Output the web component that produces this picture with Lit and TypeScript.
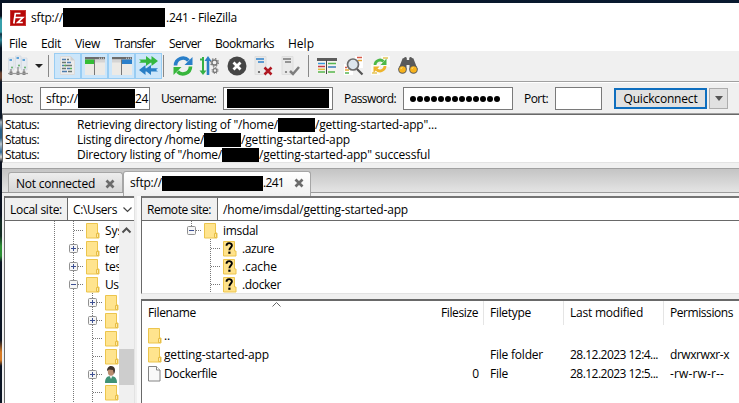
import { LitElement, html, css, svg, nothing } from "lit";
import { customElement, property } from "lit/decorators.js";

/** Text run whose tracking is tuned so that it occupies a given width. */
@customElement("ui-text")
class UiText extends LitElement {
  @property() text = "";
  @property({ type: Number }) w = 0;
  static styles = css`
    :host { display: inline-block; flex: none; white-space: pre; line-height: inherit; }
    span { display: inline-block; }
  `;
  updated() {
    const s = this.renderRoot.querySelector("span") as HTMLElement;
    s.style.letterSpacing = "0px";
    const natural = s.getBoundingClientRect().width;
    if (this.w && this.text.length > 1) {
      s.style.letterSpacing = (this.w - natural) / this.text.length + "px";
    }
  }
  render() {
    return html`<span>${this.text}</span>`;
  }
}

const t = (text: string, w: number) => html`<ui-text .text=${text} .w=${w}></ui-text>`;

const folder = html`<svg class="ic" width="14" height="17" viewBox="0 0 14 17">
  <path d="M.5 1.500h11v9.500h1.500v5H.5z" fill="#ffe48e" stroke="#ecc54d"/>
  <path d="M10.500 15.500v-4h2v4z" fill="#ffeaa8" stroke="#e6bd45"/></svg>`;
const unknown = html`<svg class="ic" width="14" height="17" viewBox="0 0 14 17">
  <path d="M.5 1.500h11v9.500h1.500v5H.5z" fill="#ffe28a" stroke="#ecc54d"/>
  <path d="M3.500 5.800c0-3.600 5.400-3.400 5.400-.3 0 2-2.500 2.100-2.500 4.700" fill="none" stroke="#000" stroke-width="1.900"/>
  <rect x="5.300" y="11.600" width="2.200" height="2.200"/></svg>`;
const fileIcon = html`<svg class="ic" width="14" height="17" viewBox="0 0 14 17">
  <path d="M.5 1.500h8l3.500 3.500v11H.5z" fill="#f9f9f9" stroke="#848484"/><path d="M8.500 1.500V5H12" fill="#fff" stroke="#848484"/></svg>`;
const user = html`<svg class="ic" width="14" height="17" viewBox="0 0 14 17">
  <path d="M0 17c0-5 2-6.500 5-7 4 0 7 1 7 7z" fill="#3f9276"/><path d="M4 9l2 4 2-4z" fill="#eee"/>
  <ellipse cx="6" cy="5.500" rx="3.200" ry="4.300" fill="#b98c70"/><path d="M2 5c0-7 8-6 8-1 0 2-.5 3-1 4L8 4 4 3.500z" fill="#3e332d"/></svg>`;
const cross = html`<svg width="10" height="10" viewBox="0 0 10 10"><path d="M1.500 1.500l7 7M8.500 1.500l-7 7" stroke="#6b6b6b" stroke-width="2.700"/></svg>`;

const icons = {
  sites: html`<svg width="20" height="20" viewBox="0 0 20 20">
    ${[[0.5, 2], [7.5, 0], [13.5, 2]].map(([x, y]) => svg`<path d="M${x} ${y}h5.500v12h-5.500z" fill="#e6ebf1" stroke="#cdd5dd" stroke-width=".6"/><path d="M${x + 1} ${y + 2}h2.500" stroke="#4f9bd5" stroke-width="1.800"/><circle cx="${x + 3.500}" cy="${y + 9.500}" r=".9" fill="#57a85c"/><path d="M${x + 2.500} ${y + 11}V18" stroke="#858585" stroke-width="1.200"/><rect x="${x + 1}" y="15.500" width="3" height="3.500" fill="#808080"/>`)}
    <path d="M0 17.500h20" stroke="#999" stroke-width="1.200"/></svg>`,
  log: html`<svg width="15" height="19" viewBox="0 0 15 19"><path d="M.5.500h10l4 4v14H.5z" fill="#ececec" stroke="#dcdcdc"/><path d="M10.500 0v4.500H15z" fill="#cfcfcf"/>
    <path d="M2 3.500h4M7 6.500h4M2 9.500h2M7 12.500h3M2 15.500h5" stroke="#4d7dae" stroke-width="1.400"/><path d="M7 3.500h2M2 6.500h4M5 9.500h7M2 12.500h4M8 15.500h4" stroke="#6b7771" stroke-width="1.400"/><path d="M4 9.500h2M10 12.500h2" stroke="#53b15a" stroke-width="1.500"/></svg>`,
  local: html`<svg width="20" height="18" viewBox="0 0 20 18"><path d="M0 0h20v18H0z" fill="#eceae6"/><path d="M0 0h20v2.500H0z" fill="#6b6b6b"/><path d="M0 2.500h9v4.500H0z" fill="#34bd36"/><path d="M9.500 2.500v15.500" stroke="#777"/><path d="M10 2.500h10v3H10z" fill="#d4d4d4"/><path d="M14 1.200h5" stroke="#ddd" stroke-dasharray="1 1"/></svg>`,
  remote: html`<svg width="20" height="18" viewBox="0 0 20 18"><path d="M0 0h20v18H0z" fill="#eceae6"/><path d="M0 0h20v2.500H0z" fill="#6b6b6b"/><path d="M10 2.500h10v4.500H10z" fill="#2b7fca"/><path d="M9.500 2.500v15.500" stroke="#777"/><path d="M0 2.500h9v3H0z" fill="#d4d4d4"/><path d="M14 1.200h5" stroke="#ddd" stroke-dasharray="1 1"/></svg>`,
  queue: html`<svg width="21" height="19" viewBox="0 0 21 19"><path d="M1 3.500h7V0l4.500 3.500h1V0L20 5l-6.500 5V6.700h-1L8 10V6.700H1l2-1.600z" fill="#35b83f"/><path d="M20 12.300h-7V9L8.500 12.300h-1V9L1 14l6.500 5v-3.500h1L13 19v-3.500h7l-2-1.600z" fill="#297fc6"/></svg>`,
  refresh: html`<svg width="20" height="20" viewBox="0 0 20 20"><path d="M2.500 9.500A7.500 7.500 0 0 1 15.500 4.500" fill="none" stroke="#2a7fc9" stroke-width="3.600"/><path d="M19.500 1v8h-8z" fill="#2a7fc9"/><path d="M17.500 10.500A7.500 7.500 0 0 1 4.500 15.500" fill="none" stroke="#38b63d" stroke-width="3.600"/><path d="M.5 19v-8h8z" fill="#38b63d"/></svg>`,
  process: html`<svg width="19" height="20" viewBox="0 0 19 20"><path d="M3 1v15M0 3.500h3" stroke="#35b044" stroke-width="2"/><path d="M-.5 14.500h7L3 19z" fill="#35b044"/><path d="M8 3v16" stroke="#2b7fc7" stroke-width="2.600"/><path d="M4.500 5h7L8 0z" fill="#2b7fc7"/>
    <circle cx="14.500" cy="6.500" r="2.600" fill="none" stroke="#777" stroke-width="1.500"/><circle cx="14.500" cy="6.500" r="3.900" fill="none" stroke="#777" stroke-width="1.200" stroke-dasharray="1.500 1.560"/><circle cx="15" cy="14.500" r="1.900" fill="none" stroke="#777" stroke-width="1.300"/><circle cx="15" cy="14.500" r="3" fill="none" stroke="#777" stroke-dasharray="1.200 1.150"/></svg>`,
  cancel: html`<svg width="20" height="20" viewBox="0 0 20 20"><circle cx="10" cy="10" r="9.500" fill="#464646"/><path d="M6.500 6.500l7 7M13.500 6.500l-7 7" stroke="#fff" stroke-width="2.800"/></svg>`,
  disconnect: html`<svg width="19" height="20" viewBox="0 0 19 20"><path d="M1 .5h11v18H1z" fill="#e9e9e9" stroke="#dedede"/><path d="M2 3h8M4 6h6" stroke="#3183ca" stroke-width="1.700"/><circle cx="5" cy="16" r="1.100" fill="#555"/><path d="M10.500 11.500l7 7M17.500 11.500l-7 7" stroke="#b01822" stroke-width="2.500"/></svg>`,
  reconnect: html`<svg width="19" height="20" viewBox="0 0 19 20"><path d="M1 .5h11v18H1z" fill="#e9e9e9" stroke="#dedede"/><path d="M2 3h8M4 6h6" stroke="#777" stroke-width="1.700"/><circle cx="5" cy="16" r="1.100" fill="#777"/><path d="M9 15l3 3 6-7" fill="none" stroke="#7d7d7d" stroke-width="2.500"/></svg>`,
  compare: html`<svg width="20" height="16" viewBox="0 0 20 16"><path d="M0 0h20v16H0z" fill="#f5f3ee"/><path d="M0 0h20v3H0z" fill="#5c5c5c"/><path d="M1 5.500h7" stroke="#389bdd" stroke-width="1.500"/><path d="M11 5.500h8M1 14h7M11 14h7" stroke="#55b64e" stroke-width="1.500"/><path d="M1 8.500h7" stroke="#c43a49" stroke-width="1.500"/><path d="M11 9h8" stroke="#3a7db9" stroke-width="1.500"/><path d="M1 11.300h7" stroke="#e4bd40" stroke-width="1.500"/><path d="M9.500 2v14" stroke="#444"/></svg>`,
  search: html`<svg width="20" height="20" viewBox="0 0 20 20"><path d="M11 0h8v12h-8zM0 8h9v11H0z" fill="#fff"/><path d="M13 1.500h5" stroke="#d65a48" stroke-width="1.500"/><path d="M14 4.500h4M1 14h4" stroke="#e5a935" stroke-width="1.500"/><path d="M1 17h4" stroke="#58b455" stroke-width="1.500"/><path d="M1 11.500h2" stroke="#d65a48" stroke-width="1.500"/><circle cx="9" cy="8.500" r="5.500" fill="#dce6ed" stroke="#6b6b6b" stroke-width="1.700"/><path d="M13 13l5.500 5.500" stroke="#555" stroke-width="2.200"/></svg>`,
  sync: html`<svg width="20" height="20" viewBox="0 0 20 20"><path d="M10 0h9v11h-9zM0 8h9v11H0z" fill="#fbfbf9"/><path d="M12 2h5M1 17h5" stroke="#e6c657" stroke-width="1.300"/><path d="M4 9a5 5 0 0 1 8.500-3.500" fill="none" stroke="#4db848" stroke-width="2.800"/><path d="M15.500 2.500v6.500h-6z" fill="#4db848"/><path d="M14 10a5 5 0 0 1-8.500 3.500" fill="none" stroke="#edb42d" stroke-width="2.800"/><path d="M2.500 17v-6.500h6z" fill="#edb42d"/></svg>`,
  find: html`<svg width="20" height="18" viewBox="0 0 20 18"><path d="M4 3q0-2 2-2 .5-1 1.500-1t1.300 1.200V3h2.400V1.200Q11.500 0 12.500 0T14 1q2 0 2 2l3.500 9h-8V8h-3v4h-8z" fill="#5a5a5a"/><circle cx="4.500" cy="12.500" r="4.300" fill="#5a5a5a"/><circle cx="15.500" cy="12.500" r="4.300" fill="#5a5a5a"/><circle cx="4.500" cy="12.500" r="3.300" fill="#f8b31c"/><circle cx="15.500" cy="12.500" r="3.300" fill="#f8b31c"/><path d="M3 12q0-1.500 1.500-1.500M14 12q0-1.500 1.500-1.500" fill="none" stroke="#ffe27a"/></svg>`,
};

type Row = { box?: "+" | "-"; label?: string; w?: number; icon: unknown; deep?: boolean };
const localRows: Row[] = [
  { label: "Sys", w: 18, icon: folder },
  { box: "+", label: "tem", w: 21, icon: folder },
  { box: "+", label: "test", w: 20, icon: folder },
  { box: "-", label: "Use", w: 20, icon: folder },
  { deep: true, box: "+", icon: folder },
  { deep: true, box: "+", icon: folder },
  { deep: true, icon: folder },
  { deep: true, icon: folder },
  { deep: true, box: "+", icon: user },
  { deep: true, icon: folder },
  { deep: true, icon: folder },
];

const joint = (box?: string, top = true, bottom = true) => html`<svg class="joint" width="22" height="18" viewBox="0 0 22 18">
  ${top ? svg`<path d="M9.500 0v9" class="dot"/>` : nothing}${bottom ? svg`<path d="M9.500 10v8" class="dot"/>` : nothing}
  <path d="M10 9.500h10" class="dot"/>
  ${box ? svg`<rect x="5.500" y="5.500" width="8" height="8" rx="1" fill="#f6f6f6" stroke="#919191"/><path d="M7 9.500h5" stroke="#3c4f92"/>${box === "+" ? svg`<path d="M9.500 7v5" stroke="#3c4f92"/>` : nothing}` : nothing}
</svg>`;
const guide = html`<svg class="guide" width="19" height="18" viewBox="0 0 19 18"><path d="M9.500 0v18" class="dot"/></svg>`;

@customElement("app-root")
class AppRoot extends LitElement {
  static styles = css`
    * { box-sizing: border-box; }
    :host {
      display: block; width: 739px; height: 403px; overflow: hidden; color: #000;
      font: 12px/18px "Open Sans", "Noto Sans", sans-serif;
      background: linear-gradient(#07101f 0 16px, #37a0ab 20px 32px, #123345 34px, #2b8595 40px, #0a1524 48px 70px, #6b4534 73px 78px, #0b1728 82px 118px, #a8b5bf 122px, #285f87 130px 138px, #bac4ca 144px, #2d6795 152px, #d8d8d4 157px, #0b1220 162px 215px, #132b23 222px 236px, #2c8f34 246px 256px, #0b1424 262px 340px, #d87b24 352px 360px, #0b1424 366px);
    }
    svg { display: block; flex: none; overflow: visible; }
    .desk { display: flex; height: 403px; padding: 3px 0 0 2px; background: linear-gradient(90deg, #071426, #091a30) top / 100% 3px no-repeat; }
    .win { flex: 1; min-width: 0; display: flex; flex-direction: column; background: #f0f0f0; }
    .black { background: #000; flex: none; }
    .title { height: 30px; flex: none; background: #fff; display: flex; align-items: center; padding: 0 0 1px 8px; }
    .title .black { width: 102px; height: 19px; margin-right: 1px; }
    .logo { margin-right: 5px; }
    .menu { height: 18px; flex: none; background: #fff; position: relative; display: flex; align-items: center; padding: 3px 0 0 7px; }
    .menu ui-text { margin-right: 14px; }
    .tools { height: 31px; flex: none; border-bottom: 1px solid #a0a0a0; display: flex; align-items: center; padding: 0 0 1px 6px; }
    .caret { width: 0; border: 4px solid transparent; border-top-color: #222; border-bottom: 0; margin: 0 5px 0 7px; }
    .sep { width: 1px; height: 22px; background: #888; flex: none; }
    .tog { width: 27px; height: 26px; border: 1px solid #99cdf3; background: #cce6fa; display: grid; place-items: center; flex: none; }
    .tool { width: 27px; display: grid; place-items: center; flex: none; }
    .sep.a { margin-right: 5px; }
    .sep.b { margin: 0 5px 0 1px; }
    .sep.c { margin: 0 4px; }
    .quick { height: 32px; flex: none; border-top: 1px solid #fff; display: flex; align-items: center; padding-left: 4px; }
    .field { height: 23px; border: 1px solid #7a7a7a; background: #fff; display: flex; align-items: center; flex: none; overflow: hidden; }
    .host { width: 110px; margin: 0 11px 0 7px; padding-left: 5px; }
    .host .black { width: 57px; height: 19px; }
    .user { width: 110px; margin: 0 11px 0 7px; padding-left: 3px; }
    .user .black { width: 102px; height: 19px; }
    .pass { width: 110px; margin: 0 11px 0 7px; padding-left: 6px; gap: 1px; }
    .bullet { width: 6px; height: 6px; border-radius: 3px; background: #000; }
    .port { width: 47px; margin: 0 12px 0 7px; }
    .btn { width: 93px; height: 21px; border: 2px solid #0f6fbf; background: #e1e1e1; display: grid; place-items: center; flex: none; }
    .drop { width: 19px; height: 21px; border: 1px solid #adadad; background: #e1e1e1; margin-left: 2px; display: grid; place-items: center; }
    .drop i { border: 4.500px solid transparent; border-top: 5px solid #555; border-bottom: 0; }
    .log { height: 49px; flex: none; border: solid #696969; border-width: 1px 0 0 1px; border-bottom: 1px solid #e3e3e3; background: #fff; box-shadow: 0 -1px #a0a0a0; padding: 2px 0 0 2px; overflow: hidden; display: flex; flex-direction: column; line-height: 15px; }
    .log p { margin: 0; height: 15px; flex: none; display: flex; align-items: center; }
    .log p > :first-child { margin-right: 38px; }
    .log .black { width: 37px; height: 14px; }
    .tabs { height: 28px; flex: none; margin-top: 5px; border-top: 1px solid #a0a0a0; display: flex; align-items: flex-end; background: linear-gradient(#c4c4c4, #e4e4e4 23px, #9b9b9b 23px 24px, #f0f0f0 24px); padding-left: 6px; }
    .tab { display: flex; align-items: center; border: 1px solid #a6a6a6; border-bottom: 0; border-radius: 3px 3px 0 0; flex: none; }
    .idle { width: 115px; height: 20px; margin-bottom: 4px; padding: 2px 0 0 7px; background: linear-gradient(#ededed, #d6d6d6); gap: 10px; }
    .live { width: 188px; height: 25px; background: linear-gradient(#fff, #f0f0f0); padding: 0 0 2px 6px; }
    .live .black { width: 101px; height: 15px; }
    .live svg { margin-left: 10px; }
    .panes { flex: 1; display: flex; min-height: 0; padding-left: 2px; }
    .local { width: 131px; flex: none; display: flex; flex-direction: column; border-left: 1px solid #696969; border-right: 1px solid #e3e3e3; }
    .top { height: 25px; flex: none; border-top: 2px solid #747474; border-bottom: 1px solid #696969; display: flex; align-items: center; }
    .cap { height: 100%; display: flex; align-items: center; border-right: 1px solid #696969; padding: 1px 0 0 5px; flex: none; }
    .local .cap { width: 63px; }
    .remote .cap { width: 76px; }
    .val { height: 100%; flex: 1; background: #fff; display: flex; align-items: center; padding: 1px 0 0 5px; gap: 6px; overflow: hidden; }
    .body { flex: 1; display: flex; min-height: 0; background: #fff; overflow: hidden; }
    .tree { flex: 1; min-width: 0; overflow: hidden; padding-left: 40px; }
    .row { display: flex; height: 18px; align-items: center; }
    .row ui-text { margin: 1px 0 0 5px; }
    .dot { stroke: #777; stroke-dasharray: 1 1; fill: none; }
    .scroll { width: 15px; background: #f0f0f0; flex: none; display: flex; flex-direction: column; }
    .scroll svg { margin: 6px 0 0 3px; }
    .thumb { height: 36px; margin-top: 116px; background: #cdcdcd; }
    .right { flex: 1; margin-left: 6px; display: flex; flex-direction: column; min-width: 0; box-shadow: -4px 0 #fafafa; background: #f0f0f0; }
    .remote { height: 98px; flex: none; display: flex; flex-direction: column; border-left: 1px solid #696969; border-bottom: 1px solid #e3e3e3; }
    .list { flex: 1; margin-top: 5px; border: solid #696969; border-width: 2px 0 0 1px; background: #fff; position: relative; }
    .cols { display: grid; grid-template-columns: 342px 80px 100px 1fr; height: 24px; }
    .cols > div { display: flex; align-items: center; border-right: 1px solid #e5e5e5; padding-left: 6px; }
    .cols > div:first-child { justify-content: space-between; padding-right: 5px; }
    .cols > div:last-child { border: 0; }
    .cols.item { height: 19px; }
    .item > div { border: 0; }
    .name { display: flex; align-items: center; gap: 2px; }
    .sort { position: absolute; left: 130px; top: 1px; }
    .first { margin-top: 1px; }
  `;
  folderRow(r: Row) {
    return html`<div class="row">${guide}${r.deep ? html`${guide}${joint(r.box)}` : joint(r.box)}${r.icon}${r.label ? t(r.label, r.w!) : nothing}</div>`;
  }
  entry(icon: unknown, name: [string, number], size: string, type: [string, number], date: string, perm: [string, number], first = false) {
    return html`<div class="cols item ${first ? "first" : ""}">
      <div><span class="name">${icon}${t(...name)}</span>${size ? t(size, 7) : nothing}</div>
      <div>${t(...type)}</div><div>${t(date, date ? 88 : 0)}</div><div>${t(...perm)}</div></div>`;
  }
  render() {
    const menu: [string, number][] = [["File", 18], ["Edit", 20], ["View", 25], ["Transfer", 41], ["Server", 32], ["Bookmarks", 59], ["Help", 26]];
    return html`<div class="desk"><div class="win">
      <div class="title">
        <svg class="logo" width="16" height="16" viewBox="0 0 16 16"><path d="M0 0h16v16H0z" fill="#b70808"/><path d="M.5.500h15v15H.5z" fill="none" stroke="#d9635c" stroke-dasharray="1 1"/><path d="M3.800 13.500L5.300 3.500h5.200M4.800 7.500h3.700M8 7.500h4.800l-5 5h5" fill="none" stroke="#fff" stroke-width="1.700"/></svg>
        ${t("sftp://", 32)}<div class="black"></div>${t(".241 - FileZilla", 71)}
      </div>
      <div class="menu">${menu.map(([a, w]) => t(a, w))}</div>
      <div class="tools">${icons.sites}<i class="caret"></i><i class="sep a"></i>
        ${[icons.log, icons.local, icons.remote, icons.queue].map((i) => html`<span class="tog">${i}</span>`)}
        <i class="sep b"></i>
        ${[icons.refresh, icons.process, icons.cancel, icons.disconnect, icons.reconnect].map((i) => html`<span class="tool">${i}</span>`)}
        <i class="sep c"></i>
        ${[icons.compare, icons.search, icons.sync, icons.find].map((i) => html`<span class="tool">${i}</span>`)}
      </div>
      <div class="quick">
        ${t("Host:", 27)}<div class="field host">${t("sftp://", 32)}<div class="black"></div>${t("24", 13)}</div>
        ${t("Username:", 55)}<div class="field user"><div class="black"></div></div>
        ${t("Password:", 52)}<div class="field pass">${Array.from({ length: 13 }, () => html`<i class="bullet"></i>`)}</div>
        ${t("Port:", 24)}<div class="field port"></div>
        <div class="btn">${t("Quickconnect", 74)}</div><div class="drop"><i></i></div>
      </div>
      <div class="log">
        <p>${t("Status:", 34)}${t('Retrieving directory listing of "/home/', 201)}<i class="black"></i>${t('/getting-started-app"...', 122)}</p>
        <p>${t("Status:", 34)}${t("Listing directory /home/", 127)}<i class="black"></i>${t("/getting-started-app", 109)}</p>
        <p>${t("Status:", 34)}${t('Directory listing of "/home/', 145)}<i class="black"></i>${t('/getting-started-app" successful', 171)}</p>
      </div>
      <div class="tabs">
        <div class="tab idle">${t("Not connected", 79)}${cross}</div>
        <div class="tab live">${t("sftp://", 32)}<div class="black"></div>${t(".241", 21)}${cross}</div>
      </div>
      <div class="panes">
        <div class="local">
          <div class="top"><div class="cap">${t("Local site:", 52)}</div><div class="val">${t("C:\\Users", 44)}<svg width="9" height="6" viewBox="0 0 9 6"><path d="M.5.500l4 4 4-4" fill="none" stroke="#444" stroke-width="1.200"/></svg></div></div>
          <div class="body"><div class="tree">${localRows.map((r) => this.folderRow(r))}</div>
            <div class="scroll"><svg width="9" height="6" viewBox="0 0 9 6"><path d="M.5 5.500l4-4 4 4" fill="none" stroke="#505050" stroke-width="2"/></svg><div class="thumb"></div></div></div>
        </div>
        <div class="right">
          <div class="remote">
            <div class="top"><div class="cap">${t("Remote site:", 64)}</div><div class="val">${t("/home/imsdal/getting-started-app", 185)}</div></div>
            <div class="body"><div class="tree">
              <div class="row">${joint("-", true, false)}${folder}${t("imsdal", 35)}</div>
              ${([[".azure", 32], [".cache", 35], [".docker", 39]] as [string, number][]).map(([a, w]) => html`<div class="row"><svg width="19" height="18"></svg>${joint()}${unknown}${t(a, w)}</div>`)}
            </div></div>
          </div>
          <div class="list">
            <svg class="sort" width="9" height="5" viewBox="0 0 9 5"><path d="M.5 4.500l4-4 4 4" fill="none" stroke="#666"/></svg>
            <div class="cols"><div>${t("Filename", 48)}${t("Filesize", 37)}</div><div>${t("Filetype", 41)}</div><div>${t("Last modified", 73)}</div><div>${t("Permissions", 63)}</div></div>
            ${this.entry(folder, ["..", 6], "", ["", 0], "", ["", 0], true)}
            ${this.entry(folder, ["getting-started-app", 105], "", ["File folder", 53], "28.12.2023 12:4...", ["drwxrwxr-x", 59])}
            ${this.entry(fileIcon, ["Dockerfile", 53], "0", ["File", 18], "28.12.2023 12:5...", ["-rw-rw-r--", 54])}
          </div>
        </div>
      </div>
    </div></div>`;
  }
}
